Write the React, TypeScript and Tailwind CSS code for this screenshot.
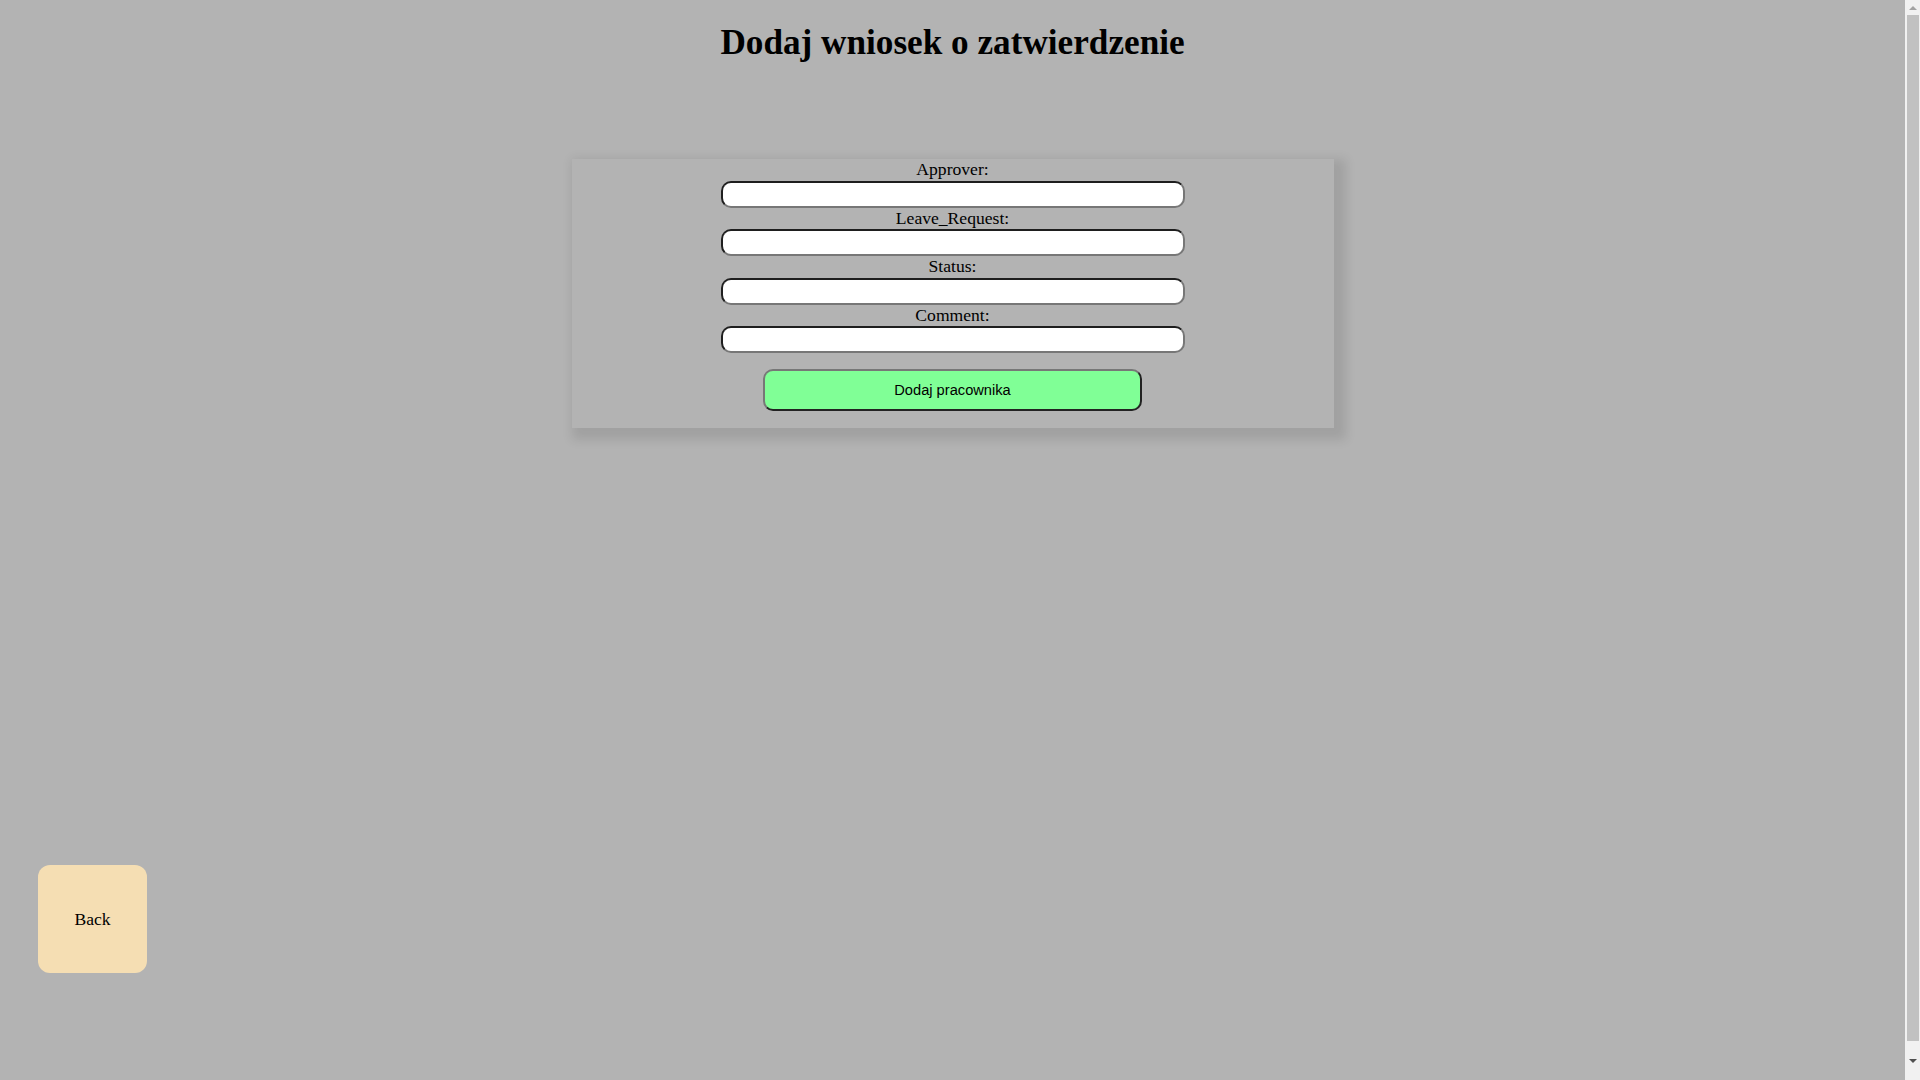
export default function App() {
  const fields = ["Approver:", "Leave_Request:", "Status:", "Comment:"];

  return (
    <div className="flex h-[1080px] overflow-hidden bg-[#b3b3b3] font-['Liberation_Serif',serif] text-black">
      <main className="flex min-w-0 flex-1 flex-col">
        <h1 className="pt-[23px] text-center text-[35.2px] font-bold leading-[40px]">
          Dodaj wniosek o zatwierdzenie
        </h1>

        <form className="mx-auto mt-[96px] flex w-[762px] flex-col items-center bg-[#b3b3b3] pb-[17px] shadow-[6px_6px_10px_6px_rgba(0,0,0,0.1)]">
          {fields.map((label) => (
            <label key={label} className="flex flex-col items-center">
              <span className="text-[17.6px] leading-[21.6px]">{label}</span>
              <input
                type="text"
                className="h-[27px] w-[464px] rounded-[10px] border-2 border-b-[#777] border-l-[#1e1e1e] border-r-[#777] border-t-[#1e1e1e] bg-white px-1 outline-none"
              />
            </label>
          ))}
          <button
            type="button"
            className="mt-[16px] h-[42px] w-[379px] rounded-[10px] border-2 border-b-[#222] border-l-[#777] border-r-[#222] border-t-[#777] bg-[#80ff96] font-['Liberation_Sans',sans-serif] text-[14.67px]"
          >
            Dodaj pracownika
          </button>
        </form>

        <button
          type="button"
          className="ml-[38px] mt-[437px] flex h-[108px] w-[109px] items-center justify-center rounded-[12px] bg-[#f5deb3] text-[17.6px]"
        >
          Back
        </button>
      </main>

      {/* page scrollbar */}
      <div className="w-[15px] shrink-0 bg-[#f1f1f1]">
        <div className="flex h-[15px] items-center justify-center">
          <div className="h-0 w-0 border-x-[4px] border-b-[4px] border-x-transparent border-b-[#a3a3a3]" />
        </div>
        <div className="ml-[2px] h-[1026px] w-[12px] bg-[#c1c1c1]" />
        <div className="flex h-[39px] items-center justify-center">
          <div className="h-0 w-0 border-x-[4px] border-t-[4px] border-x-transparent border-t-[#505050]" />
        </div>
      </div>
    </div>
  );
}
